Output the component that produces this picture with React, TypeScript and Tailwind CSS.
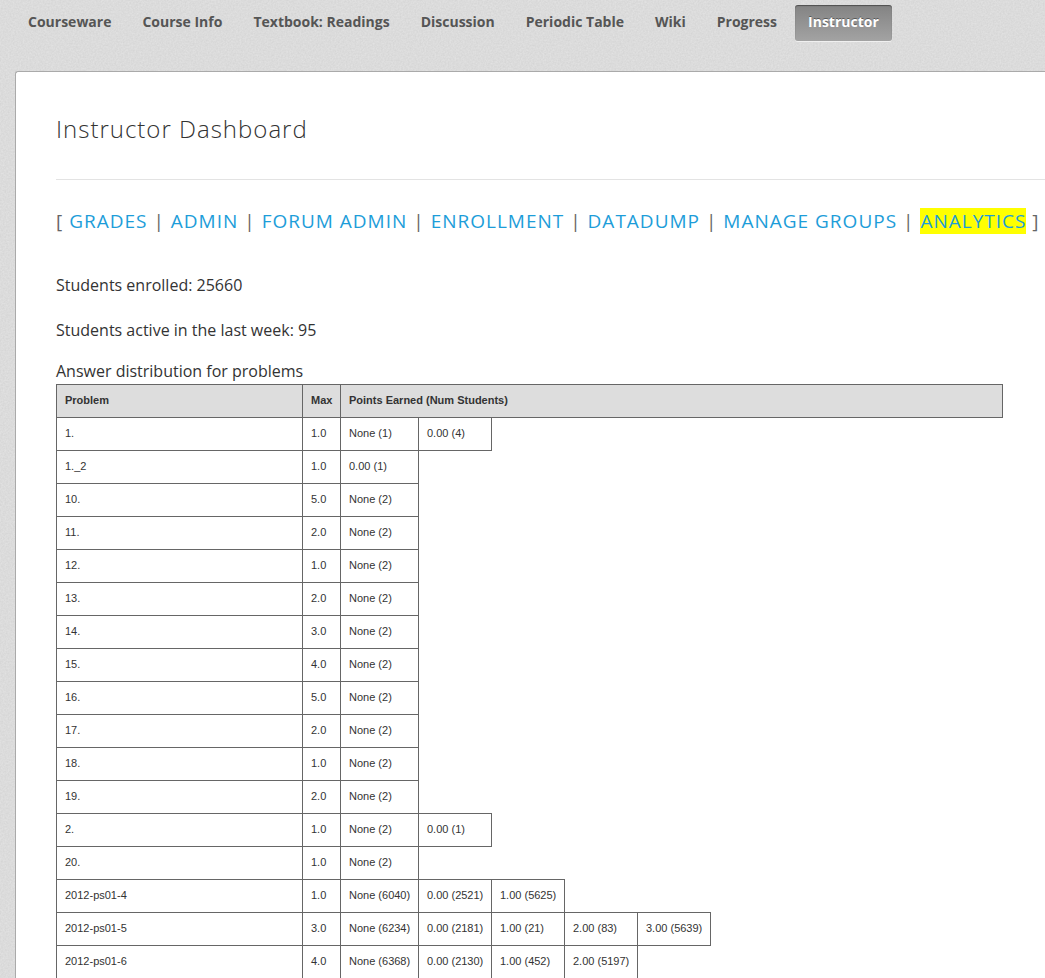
const tabs = [
  'Courseware',
  'Course Info',
  'Textbook: Readings',
  'Discussion',
  'Periodic Table',
  'Wiki',
  'Progress',
  'Instructor',
];

const sections = ['Grades', 'Admin', 'Forum Admin', 'Enrollment', 'DataDump', 'Manage Groups', 'Analytics'];

type Problem = { name: string; max: string; points: string[] };

const problems: Problem[] = [
  { name: '1.', max: '1.0', points: ['None (1)', '0.00 (4)'] },
  { name: '1._2', max: '1.0', points: ['0.00 (1)'] },
  { name: '10.', max: '5.0', points: ['None (2)'] },
  { name: '11.', max: '2.0', points: ['None (2)'] },
  { name: '12.', max: '1.0', points: ['None (2)'] },
  { name: '13.', max: '2.0', points: ['None (2)'] },
  { name: '14.', max: '3.0', points: ['None (2)'] },
  { name: '15.', max: '4.0', points: ['None (2)'] },
  { name: '16.', max: '5.0', points: ['None (2)'] },
  { name: '17.', max: '2.0', points: ['None (2)'] },
  { name: '18.', max: '1.0', points: ['None (2)'] },
  { name: '19.', max: '2.0', points: ['None (2)'] },
  { name: '2.', max: '1.0', points: ['None (2)', '0.00 (1)'] },
  { name: '20.', max: '1.0', points: ['None (2)'] },
  { name: '2012-ps01-4', max: '1.0', points: ['None (6040)', '0.00 (2521)', '1.00 (5625)'] },
  {
    name: '2012-ps01-5',
    max: '3.0',
    points: ['None (6234)', '0.00 (2181)', '1.00 (21)', '2.00 (83)', '3.00 (5639)'],
  },
  { name: '2012-ps01-6', max: '4.0', points: ['None (6368)', '0.00 (2130)', '1.00 (452)', '2.00 (5197)'] },
];

const cell = 'h-[33px] border border-[#666] px-2 pb-[2px] text-left align-middle';

function Texture() {
  return (
    <svg aria-hidden="true" className="pointer-events-none absolute inset-0 h-full w-full">
      <filter id="grain" x="0" y="0" width="100%" height="100%" colorInterpolationFilters="sRGB">
        <feTurbulence type="fractalNoise" baseFrequency="0.6" numOctaves="2" stitchTiles="stitch" />
        <feColorMatrix values="0.07 0 0 0 0.825  0.07 0 0 0 0.825  0.07 0 0 0 0.825  0 0 0 0 1" />
      </filter>
      <rect width="100%" height="100%" filter="url(#grain)" />
    </svg>
  );
}

function CourseTabs() {
  return (
    <nav aria-label="Course" className="px-[15px] pt-[5px]">
      <ul className="flex gap-[5px]">
        {tabs.map((tab) => (
          <li key={tab}>
            <a
              href="#"
              aria-current={tab === 'Instructor' ? 'page' : undefined}
              className={
                tab === 'Instructor'
                  ? 'block h-9 rounded-[3px] bg-linear-to-b from-[#838383] to-[#a3a3a3] px-[13px] text-sm leading-[34px] font-bold whitespace-nowrap text-white shadow-[inset_0_1px_1px_rgba(0,0,0,0.4),0_1px_0_#f0f0f0] [text-shadow:0_-1px_0_rgba(0,0,0,0.4)]'
                  : 'block h-9 rounded-[3px] px-[13px] text-sm leading-[34px] font-bold whitespace-nowrap text-[#555]'
              }
            >
              {tab}
            </a>
          </li>
        ))}
      </ul>
    </nav>
  );
}

function SectionLinks() {
  return (
    <h2 className="mt-7 text-[19px] leading-[26px] tracking-[1px] whitespace-nowrap text-[#666] uppercase">
      {'[ '}
      {sections.map((section, i) => (
        <span key={section}>
          {i > 0 && ' | '}
          <a href="#" className={section === 'Analytics' ? 'bg-[#ff0] text-[#1d9dd9]' : 'text-[#1d9dd9]'}>
            {section}
          </a>
        </span>
      ))}
      {' ]'}
    </h2>
  );
}

function AnswerTable() {
  return (
    <table className="-mb-px w-[947px] table-fixed border-collapse font-['Liberation_Sans',Arial,sans-serif] text-[11px] leading-4 text-[#333]">
      <colgroup>
        <col className="w-[246px]" />
        <col className="w-[38px]" />
        <col className="w-[78px]" />
        <col span={8} className="w-[73px]" />
      </colgroup>
      <thead>
        <tr className="bg-[#ddd]">
          <th scope="col" className={cell}>
            Problem
          </th>
          <th scope="col" className={cell}>
            Max
          </th>
          <th scope="col" colSpan={9} className={cell}>
            Points Earned (Num Students)
          </th>
        </tr>
      </thead>
      <tbody>
        {problems.map((problem) => (
          <tr key={problem.name}>
            <td className={cell}>{problem.name}</td>
            <td className={cell}>{problem.max}</td>
            {problem.points.map((point) => (
              <td key={point} className={`${cell} whitespace-nowrap`}>
                {point}
              </td>
            ))}
          </tr>
        ))}
      </tbody>
    </table>
  );
}

export default function App() {
  return (
    <div className="relative flex min-h-screen flex-col overflow-hidden bg-[#dcdcdc] font-['Open_Sans',sans-serif] text-[#333]">
      <Texture />
      <div className="relative flex grow flex-col">
        <CourseTabs />
        <main className="mt-[30px] ml-[15px] grow rounded-tl-[3px] border-t border-l border-[#aaa] bg-white pl-10">
          <h1 className="border-b border-[#e3e3e3] pt-[41px] pb-[34px] text-2xl leading-8 font-light tracking-[1px]">
            Instructor Dashboard
          </h1>
          <SectionLinks />
          <p className="mt-[38px] leading-[26px]">Students enrolled: 25660</p>
          <p className="mt-[19px] leading-[26px]">Students active in the last week: 95</p>
          <p className="mt-[15px] leading-[26px]">Answer distribution for problems</p>
          <AnswerTable />
        </main>
      </div>
    </div>
  );
}
